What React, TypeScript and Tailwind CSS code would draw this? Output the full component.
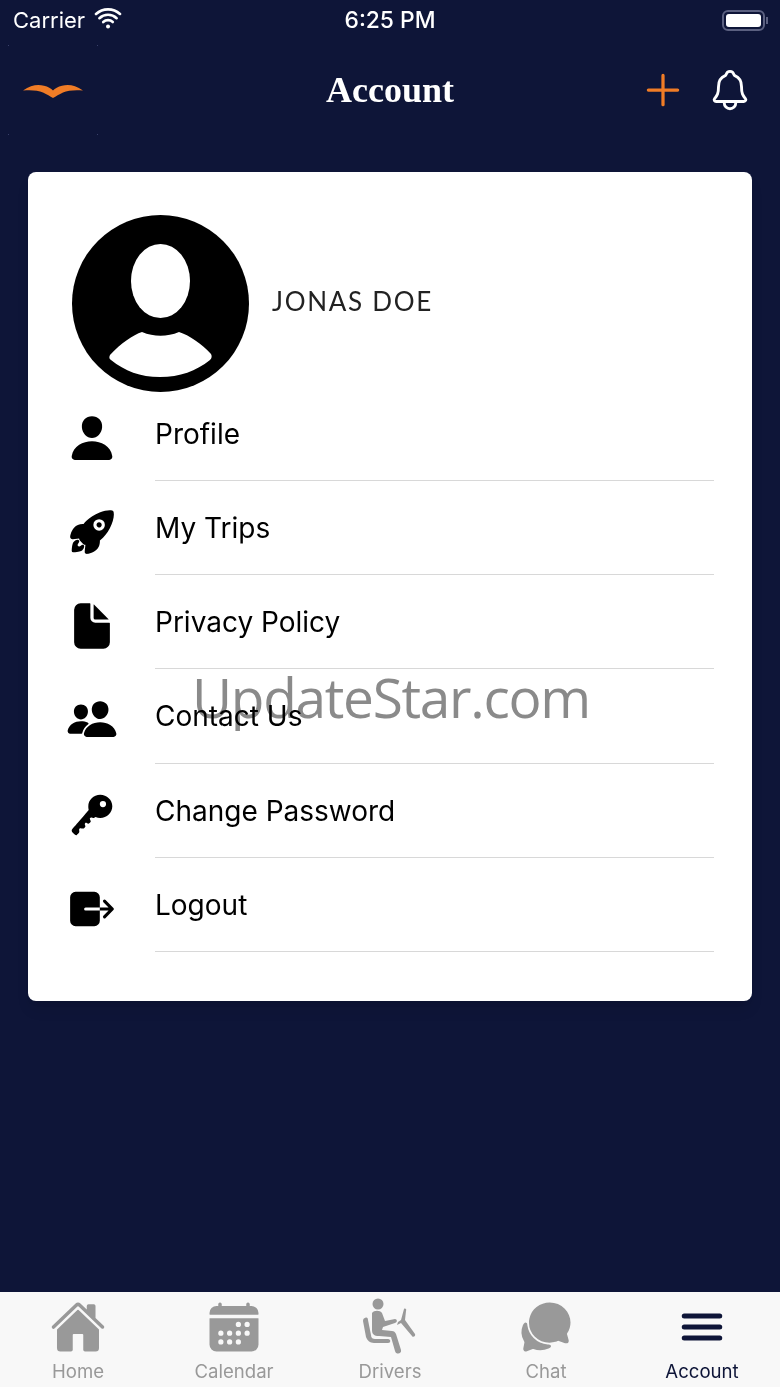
import React from "react";
import {
  IoPerson, IoRocket, IoDocument, IoPeople, IoKey, IoExit, IoNotificationsOutline, IoAddOutline,
  IoHome, IoCalendar, IoChatbubbles, IoMenu, IoWifi,
} from "react-icons/io5";

const rows = [
  { label: "Profile", Icon: IoPerson, size: 50, top: "pt-[26px]" },
  { label: "My Trips", Icon: IoRocket, size: 50, top: "pt-[26px]" },
  { label: "Privacy Policy", Icon: IoDocument, size: 52, top: "pt-[25px]" },
  { label: "Contact Us", Icon: IoPeople, size: 52, top: "pt-[24px]" },
  { label: "Change Password", Icon: IoKey, size: 50, top: "pt-[26px]" },
  { label: "Logout", Icon: IoExit, size: 50, top: "pt-[26px]" },
];

function DriverIcon() {
  return (
    <svg width="54" height="58" viewBox="0 0 54 58" fill="#999999">
      <circle cx="15" cy="6" r="5.5" />
      <path d="M9 15c2-3 8-3 10 0l3 8 10-2c2 0 3 3 0 4l-12 4-1 3 10 1c2 0 3 1 4 3l5 16c1 4-5 5-6 1l-4-14-12-1c-5 0-7-2-7-6z" />
      <path d="M2 20c2-1 3 0 3 2l3 15c0 3 2 4 4 4h13c3 0 3 4 0 4H11c-4 0-7-3-8-6L0 23c0-2 1-3 2-3z" />
      <path d="M41 11c1-1 3 0 2 2l-1 9 10 14c1 2-2 4-3 2L38 25l-4 2 1-3 3-2z" />
    </svg>
  );
}

function Tab({ label, active, children }: { label: string; active?: boolean; children: React.ReactNode }) {
  return (
    <div className="flex-1 flex flex-col items-center">
      <div className="h-[70px] flex items-center justify-center">{children}</div>
      <span className={`text-[18.6px] leading-[26px] mt-[-4px] ${active ? "text-[#0e1538]" : "text-[#999999]"}`}>{label}</span>
    </div>
  );
}

export default function App() {
  return (
    <div className="relative w-[780px] h-[1387px] overflow-hidden bg-[#0e1538] flex flex-col font-['Inter',sans-serif]">
      <div className="h-[40px] flex items-center justify-between px-[13px] text-white relative shrink-0">
        <div className="flex items-center gap-[7px] text-[22px]">
          <span>Carrier</span>
          <IoWifi size={32} className="mt-[-4px]" />
        </div>
        <span className="absolute left-0 right-0 text-center text-[22.8px] font-medium">6:25 PM</span>
        <div className="flex items-center mr-[-1px]">
          <div className="w-[43px] h-[21px] rounded-[6px] border-2 border-[#5b6080] p-[2px]">
            <div className="w-full h-full bg-white rounded-[3px]" />
          </div>
          <div className="w-[2px] h-[7px] bg-[#5b6080] ml-[1px]" />
        </div>
      </div>

      <div className="h-[100px] relative flex items-center justify-between shrink-0">
        <div className="relative w-[90px] h-[90px] ml-[8px] flex items-center justify-center">
          <span className="absolute left-0 top-0 w-[1px] h-[1px] bg-[#39406a]" />
          <span className="absolute right-0 top-0 w-[1px] h-[1px] bg-[#39406a]" />
          <span className="absolute left-0 bottom-0 w-[1px] h-[1px] bg-[#39406a]" />
          <span className="absolute right-0 bottom-0 w-[1px] h-[1px] bg-[#39406a]" />
          <svg width="60" height="15" viewBox="0 0 60 16" preserveAspectRatio="none">
            <path d="M0 8C8 2 15 1 21 3c4 1 7 3 9 5 2-2 5-4 9-5 6-2 13-1 21 5-8-1-15 0-20 2-4 2-7 4-10 6-3-2-6-4-10-6C15 8 8 7 0 8z" fill="#f07c26" />
          </svg>
        </div>
        <span className="absolute left-0 right-0 text-center text-white text-[36px] leading-none font-bold font-['Liberation_Serif',serif]">Account</span>
        <div className="flex items-center gap-[18px] mr-[27px]">
          <IoAddOutline size={52} className="text-[#f07c26]" />
          <IoNotificationsOutline size={46} className="text-white" />
        </div>
      </div>

      <div className="mx-[28px] mt-[32px] h-[829px] bg-white rounded-[8px] pt-[43px] shadow-lg shrink-0">
        <div className="flex items-center pl-[44px] gap-[23px]">
          <svg width="177" height="177" viewBox="0 0 177 177">
            <circle cx="88.5" cy="88.5" r="88.5" fill="#000" />
            <ellipse cx="88.5" cy="66" rx="29.5" ry="37" fill="#fff" />
            <path d="M38 140c11-12 23-20 32-23 12 5 25 5 37 0 10 3 23 12 32 22 1 2 1 4-1 6-14 11-30 17-50 17s-35-6-49-17c-2-1-2-3-1-5z" fill="#fff" />
          </svg>
          <span className="text-[26px] tracking-[1.7px] text-[#222] font-normal mt-[-4px] font-['Lato',sans-serif]">JONAS DOE</span>
        </div>
        <div className="mt-[-5px]">
          {rows.map(({ label, Icon, size, top }) => (
            <div key={label} className="flex h-[94.15px]">
              <div className={`w-[127px] flex justify-center pl-[1px] shrink-0 ${top}`}>
                <Icon size={size} className="text-black" />
              </div>
              <div className="w-[559px] border-b border-[#d8d8d8] flex items-center pt-[1px] text-[28px] text-black">{label}</div>
            </div>
          ))}
        </div>
      </div>

      <div className="absolute left-0 right-0 top-[1292px] h-[95px] bg-[#f8f8f8] flex">
        <Tab label="Home"><IoHome size={56} color="#999999" /></Tab>
        <Tab label="Calendar"><IoCalendar size={56} color="#999999" /></Tab>
        <Tab label="Drivers"><DriverIcon /></Tab>
        <Tab label="Chat"><IoChatbubbles size={56} color="#999999" /></Tab>
        <Tab label="Account" active><IoMenu size={54} color="#0e1538" /></Tab>
      </div>

      <span className="absolute left-[192px] top-[659px] text-[55px] leading-[76px] tracking-[-1.3px] text-[#8a8a8a] mix-blend-multiply font-['Open_Sans',sans-serif]">UpdateStar.com</span>
    </div>
  );
}
